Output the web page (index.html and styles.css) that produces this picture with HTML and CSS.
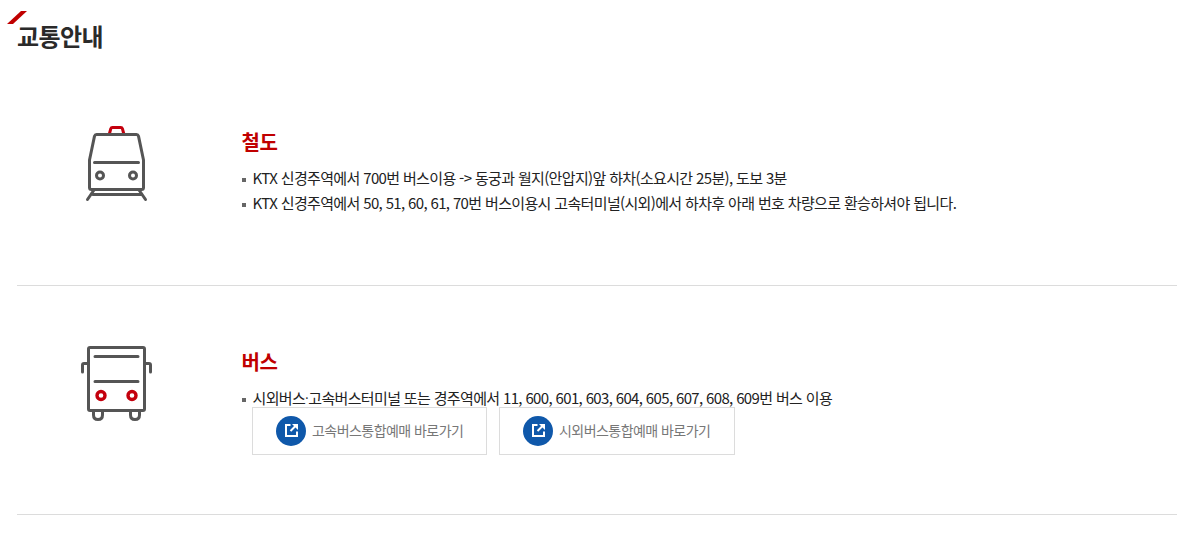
FILE: index.html
```html
<!DOCTYPE html>
<html lang="ko">
<head>
<meta charset="utf-8">
<title>교통안내</title>
<link rel="stylesheet" href="styles.css">
</head>
<body>
<main class="page">
  <header class="title">
    <svg class="title-mark" width="20" height="13" viewBox="0 0 20 13"><path d="M14 0h6L6 13H0z" fill="#c00000"/></svg>
    <h1>교통안내</h1>
  </header>
  <section class="route route-train">
    <div class="route-icon">
      <svg width="90" height="95" viewBox="0 0 90 95" fill="none" stroke="#555" stroke-width="3" stroke-linecap="round" stroke-linejoin="round">
        <path d="M34.500 18.500l1.300-4.800q.4-1.200 1.600-1.200h8.400q1.200 0 1.600 1.200l1.300 4.800" stroke="#c4000d" stroke-linecap="butt"/>
        <path d="M21.500 19.500h40q1.500 0 2 1.600l5 23.900v27.500q0 2-2 2H16.500q-2 0-2-2V45l5-23.900q.5-1.600 2-1.600z"/>
        <path d="M19.500 47.500h44M19 75l-6.500 9.500M64 75l6.500 9.500M18 79.500h48"/>
        <circle cx="25" cy="60.500" r="3.500"/><circle cx="58" cy="60.500" r="3.500"/>
      </svg>
    </div>
    <div class="route-body">
      <h2>철도</h2>
      <ul>
        <li>KTX 신경주역에서 700번 버스이용 -&gt; 동궁과 월지(안압지)앞 하차(소요시간 25분), 도보 3분</li>
        <li>KTX 신경주역에서 50, 51, 60, 61, 70번 버스이용시 고속터미널(시외)에서 하차후 아래 번호 차량으로 환승하셔야 됩니다.</li>
      </ul>
    </div>
  </section>
  <section class="route">
    <div class="route-icon">
      <svg width="90" height="95" viewBox="0 0 90 95" fill="none" stroke="#555" stroke-width="3" stroke-linecap="round" stroke-linejoin="round">
        <rect x="13.500" y="12.500" width="56" height="63" rx="1.500"/>
        <path d="M20 21.500h43M20 46.500h43M13.500 28.500H9q-1.500 0-1.500 1.500v7M69.500 28.500H74q1.500 0 1.500 1.500v7M18.500 76v4q0 4.500 4.500 4.500t4.500-4.500v-4M55.500 76v4q0 4.500 4.500 4.500t4.500-4.500v-4"/>
        <g stroke="#c4000d" stroke-width="3.400"><circle cx="26" cy="60.500" r="4"/><circle cx="57" cy="60.500" r="4"/></g>
      </svg>
    </div>
    <div class="route-body">
      <h2>버스</h2>
      <ul>
        <li>시외버스<span class="dot">·</span>고속버스터미널 또는 경주역에서 11, 600, 601, 603, 604, 605, 607, 608, 609번 버스 이용</li>
      </ul>
      <div class="links">
        <a class="link">
          <svg width="30" height="30" viewBox="0 0 30 30"><circle cx="15" cy="15" r="15" fill="#0f58aa"/><path d="M14.500 9H10v11h11v-4.500M14.500 15l5-5" fill="none" stroke="#fff" stroke-width="2"/><path d="M16 8h6v6z" fill="#fff"/></svg>
          <span>고속버스통합예매 바로가기</span>
        </a>
        <a class="link">
          <svg width="30" height="30" viewBox="0 0 30 30"><circle cx="15" cy="15" r="15" fill="#0f58aa"/><path d="M14.500 9H10v11h11v-4.500M14.500 15l5-5" fill="none" stroke="#fff" stroke-width="2"/><path d="M16 8h6v6z" fill="#fff"/></svg>
          <span>시외버스통합예매 바로가기</span>
        </a>
      </div>
    </div>
  </section>
</main>
</body>
</html>
```
FILE: styles.css
```css
* { box-sizing: border-box; }
body {
  margin: 0;
  background: #fff;
  color: #222;
  font-family: "Noto Sans CJK KR", "Noto Sans", sans-serif;
  font-size: 15px;
  letter-spacing: -0.65px;
  overflow: hidden;
}
h1, h2, ul { margin: 0; padding: 0; }
.page { padding-left: 17px; }
.title { position: relative; height: 57px; padding-top: 18px; }
.title-mark { position: absolute; left: -10px; top: 11px; }
h1 {
  font-size: 24px;
  line-height: 36px;
  font-weight: 700;
  letter-spacing: -0.6px;
  color: #2a2a2a;
}
.route {
  display: flex;
  height: 229px;
  padding-top: 49px;
  border-bottom: 1px solid #dcdcdc;
}
.route-train { padding-top: 58px; }
.route-icon { flex: 0 0 225px; padding-left: 58px; }
.route-icon svg { display: block; }
.route-body { padding-top: 12px; white-space: nowrap; }
h2 {
  font-size: 20px;
  line-height: 30px;
  font-weight: 700;
  letter-spacing: -0.4px;
  margin-left: -0.5px;
  color: #c00000;
}
ul { list-style: none; padding-top: 8px; }
li {
  display: flex;
  align-items: center;
  height: 25px;
  line-height: 25px;
}
li::before {
  content: "";
  width: 4px;
  height: 4px;
  margin: 4px 6.500px 0 0;
  background: #666;
}
.dot { font-weight: 300; }
.links { display: flex; gap: 12px; margin: -3px 0 0 10px; }
.link {
  display: flex;
  align-items: center;
  width: 235px;
  height: 48px;
  padding-left: 23px;
  border: 1px solid #dcdcdc;
  gap: 6px;
  font-size: 14px;
  letter-spacing: -0.55px;
  color: #777;
}
.link span { margin-top: -3px; }
.link + .link { width: 236px; }
```
